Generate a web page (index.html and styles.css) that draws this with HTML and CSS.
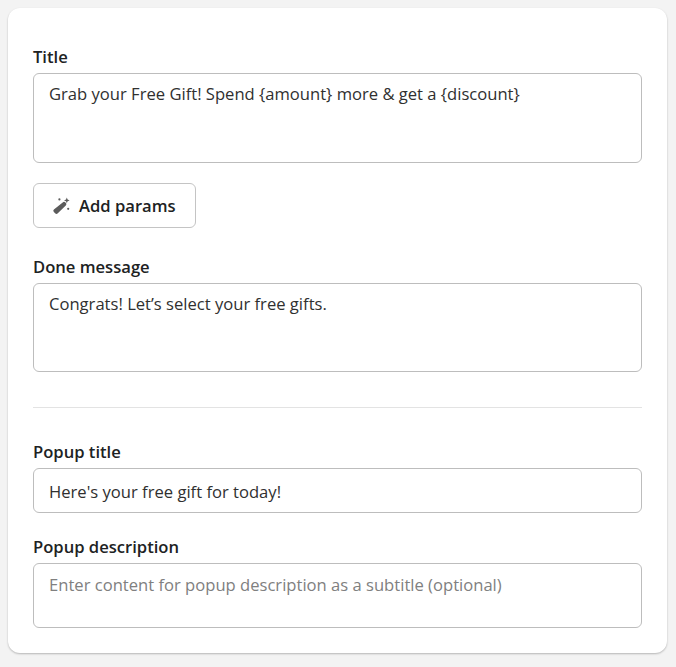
FILE: index.html
```html
<!DOCTYPE html>
<html lang="en">
<head>
  <meta charset="UTF-8" />
  <title>Gift settings</title>
  <link rel="stylesheet" href="styles.css">
</head>
<body>
  <div class="card">
    <div class="field title-field">
      <label class="label" for="title">Title</label>
      <textarea class="control area-lg" id="title">Grab your Free Gift! Spend {amount} more &amp; get a {discount}</textarea>
    </div>
    <button class="add-params" type="button">
      <svg class="wand" viewBox="0 0 20 20" width="20" height="20" aria-hidden="true">
        <path d="M11.7 6.4a1.9 1.9 0 0 1 2.7 0l.4.4a1.9 1.9 0 0 1 0 2.7l-8 7.7a1.9 1.9 0 0 1-2.7 0l-1.2-1.1a1.9 1.9 0 0 1 0-2.7z"/>
        <path d="M15.8 1.6l.8 2 2 .8-2 .8-.8 2-.8-2-2-.8 2-.8z"/>
        <circle cx="8.4" cy="3.4" r="1.1"/>
        <circle cx="17.2" cy="12.8" r="1.1"/>
      </svg>
      <span>Add params</span>
    </button>
    <div class="field done-field">
      <label class="label" for="done">Done message</label>
      <textarea class="control area-done" id="done">Congrats! Let’s select your free gifts.</textarea>
    </div>
    <hr class="divider">
    <div class="field">
      <label class="label" for="popup-title">Popup title</label>
      <input class="control single" id="popup-title" type="text" value="Here's your free gift for today!">
    </div>
    <div class="field popup-desc">
      <label class="label" for="popup-desc">Popup description</label>
      <textarea class="control area-sm" id="popup-desc" placeholder="Enter content for popup description as a subtitle (optional)"></textarea>
    </div>
  </div>
</body>
</html>
```

FILE: styles.css
```css
* {
  box-sizing: border-box;
}

body {
  margin: 0;
  padding: 8px 9px 14px 8px;
  background-color: #f3f3f3;
  color: #202223;
  font-family: "Open Sans", "Noto Sans", sans-serif;
}

.card {
  background-color: #fff;
  border-radius: 12px;
  box-shadow: 0 1px 2px rgba(0, 0, 0, 0.25);
  padding: 37px 25px 25px;
  height: 645px;
}

.label {
  display: block;
  height: 28px;
  font-size: 16.6px;
  font-weight: 600;
  line-height: 24px;
  color: #202223;
}

.control {
  display: block;
  width: 100%;
  padding: 8px 15px;
  border: 1px solid #bdbdbd;
  border-radius: 6px;
  background-color: #fff;
  color: #303030;
  font-family: inherit;
  font-size: 16.6px;
  line-height: 24px;
  resize: none;
  outline: none;
}

.control::placeholder {
  color: #808080;
  opacity: 1;
}

.area-lg {
  height: 90px;
}

.area-done {
  height: 89px;
}

.area-sm {
  height: 65px;
  padding-top: 9px;
}

.single {
  height: 45px;
  padding: 9px 15px 7px;
}

.add-params {
  display: flex;
  align-items: center;
  gap: 8px;
  width: 163px;
  height: 45px;
  margin-top: 20px;
  padding: 0 0 0 17px;
  border: 1px solid #c4c4c4;
  border-radius: 6px;
  background-color: #fff;
  color: #202223;
  font-family: inherit;
  font-size: 16.6px;
  font-weight: 600;
}

.wand {
  fill: #5c5c5c;
  flex-shrink: 0;
}

.done-field {
  margin-top: 27px;
}

.divider {
  height: 1px;
  margin: 35px 0 32px;
  border: 0;
  background-color: #e3e3e3;
}

.popup-desc {
  margin-top: 22px;
}
```
